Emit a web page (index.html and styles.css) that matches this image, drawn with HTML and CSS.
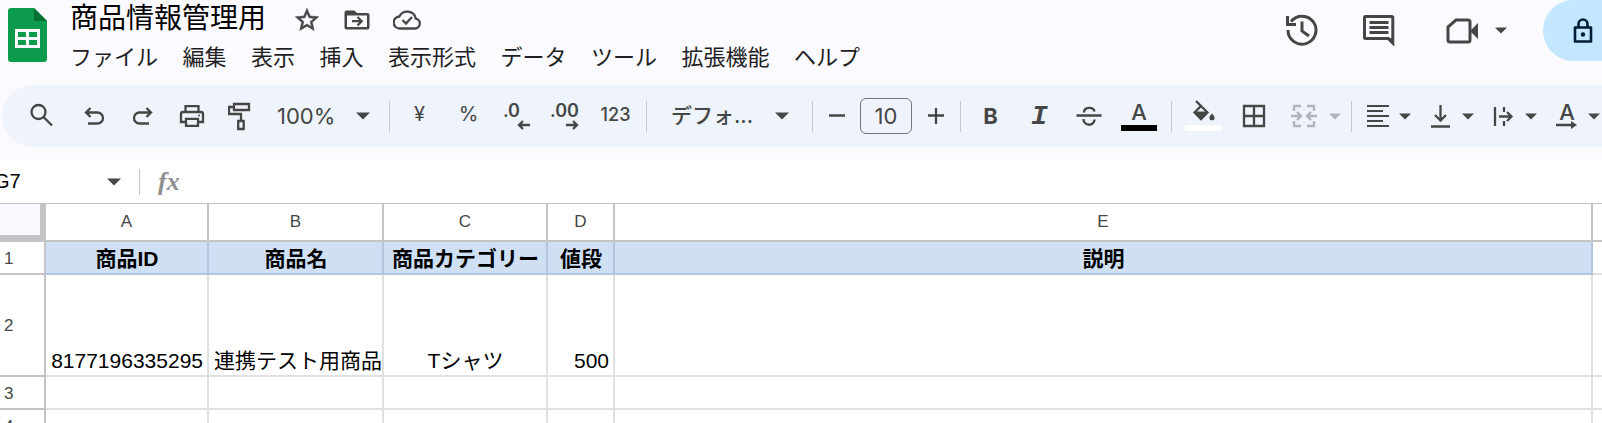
FILE: index.html
```html
<!doctype html>
<html lang="ja">
  <head>
    <meta charset="UTF-8" />
    <meta name="viewport" content="width=device-width, initial-scale=1.0" />
    <title>商品情報管理用</title>
    <link rel="stylesheet" href="styles.css">
  </head>
  <body>
    <svg class="symbols" aria-hidden="true">
      <symbol id="caret" viewBox="0 0 14 8"><path d="M0 0.5h14L7 7.5z" fill="currentColor"/></symbol>
    </svg>

    <header class="app-header">
      <svg class="logo" viewBox="0 0 39 54" width="39" height="54" role="img" aria-label="スプレッドシート">
        <path d="M3 0h23l13 13v38a3 3 0 0 1-3 3H3a3 3 0 0 1-3-3V3a3 3 0 0 1 3-3z" fill="#0c9b4c"/>
        <path d="M26 0l13 13H26z" fill="#057033"/>
        <path d="M7 21h25v19H7zM10 24v5h8v-5zM21 24v5h8v-5zM10 32v5h8v-5zM21 32v5h8v-5z" fill="#fff" fill-rule="evenodd"/>
      </svg>

      <div class="doc">
        <div class="doc-title">
          <h1>商品情報管理用</h1>
          <button class="title-button" aria-label="スター">
            <svg viewBox="0 0 24 24" width="28" height="28"><path fill="currentColor" stroke="currentColor" stroke-width=".5" d="M22 9.24l-7.19-.62L12 2 9.19 8.63 2 9.24l5.46 4.73L5.82 21 12 17.27 18.18 21l-1.63-7.03L22 9.24zM12 15.4l-3.76 2.27 1-4.28-3.32-2.88 4.38-.38L12 6.1l1.71 4.04 4.38.38-3.32 2.88 1 4.28L12 15.4z"/></svg>
          </button>
          <button class="title-button" aria-label="移動">
            <svg viewBox="0 0 28 28" width="28" height="28"><path fill="currentColor" d="M3.500 4.500h8l2.500 2.500h10.500a2 2 0 0 1 2 2v12.500a2 2 0 0 1-2 2h-21a2 2 0 0 1-2-2v-15a2 2 0 0 1 2-2zM4 9.500v11.500h20v-11.500z" fill-rule="evenodd"/><path d="M9 15.200h9M14.500 11l4.200 4.200-4.200 4.200" fill="none" stroke="currentColor" stroke-width="2.200"/></svg>
          </button>
          <button class="title-button" aria-label="保存済み">
            <svg viewBox="0 0 28 28" width="28" height="28" fill="none" stroke="currentColor" stroke-width="2.300"><path d="M7 22.500h15a5 5 0 0 0 .8-9.900A8.800 8.800 0 0 0 6.300 10.500 6 6 0 0 0 7 22.500z" /><path d="M9.500 14l3.500 3.500 6-6.500"/></svg>
          </button>
        </div>
        <nav class="menu">
          <button>ファイル</button>
          <button>編集</button>
          <button>表示</button>
          <button>挿入</button>
          <button>表示形式</button>
          <button>データ</button>
          <button>ツール</button>
          <button>拡張機能</button>
          <button>ヘルプ</button>
        </nav>
      </div>

      <div class="actions">
        <button aria-label="変更履歴">
          <svg viewBox="0 0 36 36" width="36" height="36" fill="none" stroke="currentColor" stroke-width="3"><path d="M3 17A14 14 0 1 0 6 8.500"/><path d="M2.500 3v8.500H11M17 8.500V18l7 5"/></svg>
        </button>
        <button aria-label="コメント">
          <svg viewBox="0 0 36 36" width="36" height="36" fill="none" stroke="currentColor" stroke-width="3"><path d="M4 3.500h27a.8.8 0 0 1 .8.8V30l-4.500-4.500H4.500a1 1 0 0 1-1-1V4.500a1 1 0 0 1 1-1z"/><path d="M8.500 9.500h19M8.500 14.500h19M8.500 19.500h19"/><path d="M25 25l8 8v-8z" fill="currentColor" stroke="none"/></svg>
        </button>
        <button class="meet" aria-label="通話">
          <svg viewBox="0 0 36 36" width="36" height="36"><path d="M11 7h12a2 2 0 0 1 2 2v18a2 2 0 0 1-2 2H5a2 2 0 0 1-2-2V14z" fill="none" stroke="currentColor" stroke-width="3"/><path d="M25 18l8-8v16z" fill="currentColor"/></svg>
          <svg class="caret" width="12" height="7"><use href="#caret"/></svg>
        </button>
        <button class="share" aria-label="共有">
          <svg viewBox="0 0 20 26" width="20" height="26"><path d="M2 9.500h16v14H2zM5.500 9V6a4.500 4.500 0 0 1 9 0v3" fill="none" stroke="currentColor" stroke-width="2.600" stroke-linejoin="round"/><circle cx="10" cy="16.500" r="2.200" fill="currentColor"/></svg>
        </button>
      </div>
    </header>

    <div class="toolbar" role="toolbar">
      <button class="tool search" aria-label="メニューを検索">
        <svg viewBox="0 0 26 26" width="26" height="26" fill="none" stroke="currentColor" stroke-width="2.300"><circle cx="10.500" cy="9" r="7"/><path d="M15.500 14l8.500 8.500"/></svg>
      </button>
      <button class="tool" aria-label="元に戻す">
        <svg viewBox="0 0 26 26" width="26" height="26" fill="none" stroke="currentColor" stroke-width="2.300"><path d="M9.500 5L5 9.500l4.500 4.500M5 9.500h11.500a5.500 5.500 0 0 1 0 11H7"/></svg>
      </button>
      <button class="tool" aria-label="やり直し">
        <svg viewBox="0 0 26 26" width="26" height="26" fill="none" stroke="currentColor" stroke-width="2.300"><path d="M16.500 5l4.500 4.500-4.500 4.500M21 9.500H9.500a5.500 5.500 0 0 0 0 11H19"/></svg>
      </button>
      <button class="tool" aria-label="印刷">
        <svg viewBox="0 0 26 26" width="26" height="26" fill="none" stroke="currentColor" stroke-width="2.300"><path d="M6.500 9V3.200h13V9M6 19H2V11a2 2 0 0 1 2-2h18a2 2 0 0 1 2 2v8h-4M7 15.800h12v7H7z"/><circle cx="20" cy="12.500" r="1" fill="currentColor" stroke="none"/></svg>
      </button>
      <button class="tool" aria-label="書式を貼り付け">
        <svg viewBox="0 0 26 30" width="26" height="30" fill="none" stroke="currentColor" stroke-width="2.300"><path d="M6 3h15v6H6zM6 6H1v7h12v7M10.200 20h5.500v8h-5.500z"/></svg>
      </button>
      <label class="picker zoom">
        <select aria-label="ズーム"><option>100%</option></select>
        <svg class="caret" width="14" height="8"><use href="#caret"/></svg>
      </label>
      <span class="divider"></span>
      <button class="tool sign" aria-label="通貨">¥</button>
      <button class="tool sign" aria-label="パーセント">%</button>
      <button class="tool decimal less" aria-label="小数点以下の桁数を減らす">
        <span>.0</span>
        <svg viewBox="0 0 13 10" width="13" height="10" fill="none" stroke="currentColor" stroke-width="2.300"><path d="M6 1L2 5l4 4M2 5h11"/></svg>
      </button>
      <button class="tool decimal" aria-label="小数点以下の桁数を増やす">
        <span>.00</span>
        <svg viewBox="0 0 13 10" width="13" height="10" fill="none" stroke="currentColor" stroke-width="2.300"><path d="M7 1l4 4-4 4M11 5H0"/></svg>
      </button>
      <button class="tool number" aria-label="表示形式の詳細">123</button>
      <span class="divider"></span>
      <label class="picker family">
        <select aria-label="フォント"><option>デフォ...</option></select>
        <svg class="caret" width="14" height="8"><use href="#caret"/></svg>
      </label>
      <span class="divider"></span>
      <button class="tool step" aria-label="縮小">
        <svg viewBox="0 0 16 16" width="16" height="16"><path d="M0 7.500h16" stroke="currentColor" stroke-width="2.300"/></svg>
      </button>
      <input class="font-size" type="text" value="10" aria-label="フォントサイズ" />
      <button class="tool step" aria-label="拡大">
        <svg viewBox="0 0 16 16" width="16" height="16"><path d="M0 7.500h16M8 0v16" stroke="currentColor" stroke-width="2.300"/></svg>
      </button>
      <span class="divider"></span>
      <button class="tool bold" aria-label="太字">B</button>
      <button class="tool italic" aria-label="斜体">I</button>
      <button class="tool" aria-label="取り消し線">
        <svg viewBox="0 0 26 26" width="26" height="26" fill="none" stroke="currentColor" stroke-width="2.400"><path d="M.5 12.500h25M8 9.500C8 3.500 17.500 3.500 18.500 8.500M7.500 16c0 7.500 11 7.500 11 .5"/></svg>
      </button>
      <button class="tool color" aria-label="テキストの色">
        <span class="color-letter">A</span>
        <span class="swatch black"></span>
      </button>
      <span class="divider"></span>
      <button class="tool color fill" aria-label="塗りつぶしの色">
        <svg viewBox="0 0 24 24" width="24" height="24"><path d="M5 2l5 5-6.500 6.500L10 20l6.500-6.500L10 7" fill="none" stroke="currentColor" stroke-width="2.300"/><path d="M3 12.500h14L10 20.500z" fill="currentColor"/><path d="M21 14.500c2 2.200 2.600 3.200 2.600 4.200a2.600 2.600 0 0 1-5.200 0c0-1 .6-2 2.600-4.200z" fill="currentColor"/></svg>
        <span class="swatch white"></span>
      </button>
      <button class="tool" aria-label="枠線">
        <svg viewBox="0 0 24 24" width="24" height="24" fill="none" stroke="currentColor" stroke-width="2.300"><path d="M2 2h20v20H2zM12 2v20M2 12h20"/></svg>
      </button>
      <button class="split merge" aria-label="セルを結合" disabled>
        <svg viewBox="0 0 26 24" width="26" height="24" fill="none" stroke="currentColor" stroke-width="2.400"><path d="M10 2H3v5M3 17v5h7M16 2h7v5M23 17v5h-7M0 12h9M6 8l4 4-4 4M26 12h-9M20 8l-4 4 4 4"/></svg>
        <svg class="caret" width="12" height="7"><use href="#caret"/></svg>
      </button>
      <span class="divider"></span>
      <button class="split" aria-label="水平方向の配置">
        <svg viewBox="0 0 24 24" width="24" height="24" stroke="currentColor" stroke-width="2.200"><path d="M1 2h22M1 7h16M1 12h22M1 17h16M1 22h22"/></svg>
        <svg class="caret" width="12" height="7"><use href="#caret"/></svg>
      </button>
      <button class="split" aria-label="垂直方向の配置">
        <svg viewBox="0 0 24 24" width="24" height="24" fill="none" stroke="currentColor" stroke-width="2.300"><path d="M2 22.500h19M11.500 1v15M6 11l5.500 5.500L17 11"/></svg>
        <svg class="caret" width="12" height="7"><use href="#caret"/></svg>
      </button>
      <button class="split" aria-label="テキストの折り返し">
        <svg viewBox="0 0 24 24" width="24" height="24" fill="none" stroke="currentColor" stroke-width="2.300"><path d="M3 3v19M12 3v5M12 17v5M7 12.500h12M15 8l4.500 4.500L15 17"/></svg>
        <svg class="caret" width="12" height="7"><use href="#caret"/></svg>
      </button>
      <button class="split rotate" aria-label="テキストの回転">
        <span class="rotate-icon">
          <span>A</span>
          <svg viewBox="0 0 22 8" width="22" height="8"><path d="M1 4h17" stroke="currentColor" stroke-width="2.300"/><path d="M16 0v8l6-4z" fill="currentColor"/></svg>
        </span>
        <svg class="caret" width="12" height="7"><use href="#caret"/></svg>
      </button>
    </div>

    <div class="formula-bar">
      <input class="name-box" type="text" value="G7" aria-label="名前ボックス" />
      <svg class="caret" width="14" height="8"><use href="#caret"/></svg>
      <span class="divider"></span>
      <label class="fx" for="formula">fx</label>
      <input class="formula" id="formula" type="text" />
    </div>

    <table class="sheet">
      <colgroup>
        <col class="col-head" />
        <col class="col-a" />
        <col class="col-b" />
        <col class="col-c" />
        <col class="col-d" />
        <col />
        <col class="col-f" />
      </colgroup>
      <thead>
        <tr>
          <th class="corner"></th>
          <th>A</th>
          <th>B</th>
          <th>C</th>
          <th>D</th>
          <th>E</th>
          <th></th>
        </tr>
      </thead>
      <tbody>
        <tr class="titles">
          <th>1</th>
          <td>商品ID</td>
          <td>商品名</td>
          <td>商品カテゴリー</td>
          <td>値段</td>
          <td>説明</td>
          <td class="blank"></td>
        </tr>
        <tr class="tall">
          <th>2</th>
          <td class="right">8177196335295</td>
          <td>連携テスト用商品</td>
          <td class="center">Tシャツ</td>
          <td class="right">500</td>
          <td></td>
          <td></td>
        </tr>
        <tr>
          <th>3</th>
          <td></td>
          <td></td>
          <td></td>
          <td></td>
          <td></td>
          <td></td>
        </tr>
        <tr>
          <th>4</th>
          <td></td>
          <td></td>
          <td></td>
          <td></td>
          <td></td>
          <td></td>
        </tr>
      </tbody>
    </table>
  </body>
</html>
```
FILE: styles.css
```css
:root {
  --page: #fbfaff;
  --bar: #eff3fb;
  --ink: #444746;
  --line-dark: #c4c3c6;
  --line: #e0e0e0;
  --title-fill: #cfe0f5;
  --title-line: #b3c5df;
}

* {
  box-sizing: border-box;
}

body {
  margin: 0;
  height: 100vh;
  overflow: hidden;
  background: var(--page);
  color: #1f1f1f;
  font-family: 'Liberation Sans', 'Noto Sans CJK JP', sans-serif;
}

button,
input,
select {
  margin: 0;
  padding: 0;
  border: none;
  background: transparent;
  color: inherit;
  font: inherit;
}

svg {
  display: block;
  flex: none;
}

.symbols {
  position: absolute;
  width: 0;
  height: 0;
}

/* Header */
.app-header {
  display: flex;
  align-items: flex-start;
  padding-bottom: 15px;
  color: var(--ink);
}

.logo {
  margin: 8px 23px 0 8px;
}

.doc-title {
  display: flex;
  align-items: center;
  gap: 22px;
  height: 32px;
  margin-bottom: 8px;
}

.doc-title h1 {
  margin: 0 5px 0 0;
  color: #000;
  font-family: 'Noto Sans CJK JP', sans-serif;
  font-size: 28px;
  font-weight: 400;
  line-height: 32px;
}

.title-button {
  margin-top: 8px;
}

.menu {
  display: flex;
  justify-content: space-between;
  width: 790px;
}

.menu button {
  color: #1f1f1f;
  font-family: 'Noto Sans CJK JP', sans-serif;
  font-size: 22px;
  line-height: 30px;
  white-space: nowrap;
}

.actions {
  display: flex;
  align-items: center;
  gap: 40px;
  height: 61px;
  margin-left: auto;
}

.meet {
  display: flex;
  align-items: center;
  gap: 14px;
  margin-left: 8px;
}

.share {
  display: flex;
  align-items: center;
  height: 61px;
  width: 59px;
  margin-left: -4px;
  padding-left: 30px;
  border-radius: 31px 0 0 31px;
  background: #c2e7ff;
  color: #001d35;
}

/* Toolbar */
.toolbar {
  display: flex;
  align-items: center;
  height: 62px;
  margin: 0 0 13px 2px;
  padding-left: 14px;
  border-radius: 31px 0 0 31px;
  background: var(--bar);
  color: var(--ink);
  font-family: Inter, 'Noto Sans CJK JP', sans-serif;
  font-size: 22px;
  overflow: hidden;
}

.toolbar > * {
  flex: none;
}

.tool {
  display: flex;
  align-items: center;
  justify-content: center;
  width: 49px;
  height: 42px;
}

.search {
  margin-right: 4px;
}

.divider {
  width: 1px;
  height: 31px;
  margin: 0 5px 0 6px;
  background: #c4c7cf;
}

.picker {
  display: flex;
  align-items: center;
  justify-content: space-between;
}

.picker select {
  appearance: none;
  line-height: 30px;
}

.zoom {
  width: 118px;
  padding: 0 13px 0 12px;
}

.family {
  width: 154px;
  padding: 0 17px 0 19px;
  font-size: 21px;
  font-weight: 500;
}

.sign {
  padding-bottom: 5px;
  font-size: 20px;
}

.decimal {
  flex-direction: column;
  align-items: flex-end;
  padding-right: 12px;
  font-size: 18px;
  font-weight: 600;
  line-height: 18px;
}

.less span {
  padding-right: 10px;
}

.number {
  padding-bottom: 3px;
  font-size: 18px;
  font-weight: 500;
}

.step {
  width: 37px;
}

.font-size {
  width: 52px;
  height: 36px;
  margin: 0 5px;
  border: 1px solid #747775;
  border-radius: 6px;
  text-align: center;
}

.bold {
  font-weight: 700;
}

.italic {
  font-family: 'Liberation Mono', monospace;
  font-size: 28px;
  font-style: italic;
  font-weight: 700;
}

.color {
  flex-direction: column;
  justify-content: flex-end;
  width: 52px;
  padding-bottom: 6px;
}

.fill {
  gap: 2px;
}

.color-letter {
  font-weight: 500;
  line-height: 26px;
}

.swatch {
  width: 36px;
  height: 6px;
}

.black {
  background: #000;
}

.white {
  background: #fff;
}

.split {
  display: flex;
  align-items: center;
  gap: 9px;
  width: 63px;
  height: 42px;
  padding: 0 9px;
}

.merge {
  gap: 12px;
  width: 67px;
  padding: 0 3px 0 13px;
  color: #b0b3ba;
}

.rotate-icon {
  width: 24px;
  font-weight: 500;
  line-height: 18px;
  text-align: center;
}

/* Formula bar */
.formula-bar {
  display: flex;
  align-items: center;
  height: 44px;
  border-bottom: 1px solid var(--line-dark);
  background: #fff;
  color: var(--ink);
}

.name-box {
  width: 113px;
  margin-left: -6px;
  color: #000;
  font-size: 20px;
}

.formula-bar .divider {
  height: 26px;
  margin: 0 18px;
}

.fx {
  color: #8f8f8f;
  font-family: 'Liberation Serif', serif;
  font-size: 26px;
  font-style: italic;
  font-weight: 700;
  line-height: 30px;
}

.formula {
  flex: 1;
  margin-left: 12px;
  font-size: 21px;
}

/* Sheet */
.sheet {
  width: 100%;
  table-layout: fixed;
  border-collapse: separate;
  border-spacing: 0;
  background: #fff;
  color: #000;
  font-size: 21px;
  line-height: 24px;
}

.col-head {
  width: 46px;
}

.col-a {
  width: 163px;
}

.col-b {
  width: 175px;
}

.col-c {
  width: 164px;
}

.col-d {
  width: 67px;
}

.col-f {
  width: 9px;
}

.sheet th,
.sheet td {
  height: 33px;
  padding: 0 4px;
  border-right: 2px solid var(--line);
  border-bottom: 2px solid var(--line);
  white-space: nowrap;
  overflow: hidden;
}

.sheet tr > :last-child {
  border-right: none;
}

.sheet th {
  border-color: var(--line-dark);
  color: var(--ink);
  font-size: 17px;
  font-weight: 400;
}

.sheet thead th {
  height: 38px;
}

.sheet .corner {
  border-right-width: 6px;
  border-bottom-width: 7px;
  background: #f8f9fe;
}

.sheet tbody th {
  padding-top: 2px;
  text-align: left;
}

.sheet td {
  padding: 0 4px 2px 5px;
  vertical-align: bottom;
}

.sheet .titles td {
  border-color: var(--title-line);
  background: var(--title-fill);
  font-weight: 700;
  text-align: center;
}

.sheet .titles .blank {
  border-color: var(--line);
  background: #fff;
}

.sheet .tall td,
.sheet .tall th {
  height: 102px;
}

.sheet .right {
  text-align: right;
}

.sheet .center {
  text-align: center;
}
```
